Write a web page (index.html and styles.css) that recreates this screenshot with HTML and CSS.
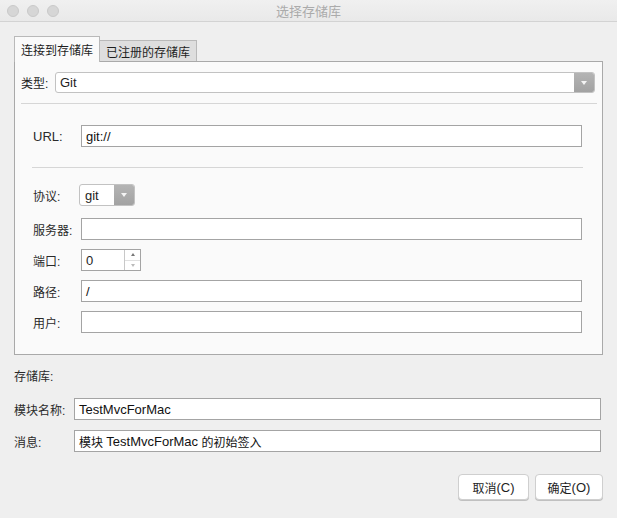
FILE: index.html
```html
<!DOCTYPE html>
<html lang="zh">
<head>
<meta charset="utf-8">
<title>选择存储库</title>
<link rel="stylesheet" href="styles.css">
</head>
<body>
<div class="window">
  <div class="titlebar">
    <div class="lights"><span class="light"></span><span class="light"></span><span class="light"></span></div>
    <div class="title">选择存储库</div>
    <div></div>
  </div>
  <div class="content">
    <div class="tabs">
      <div class="tab active">连接到存储库</div>
      <div class="tab">已注册的存储库</div>
    </div>
    <div class="panel">
      <div class="type-row">
        <span class="type-label">类型:</span>
        <div class="combo wide"><span class="combo-text latin">Git</span><span class="combo-btn"><span class="tri"></span></span></div>
      </div>
      <div class="sep outer"></div>
      <div class="group">
        <div class="row url-row"><span class="lbl latin">URL:</span><div class="field latin">git://</div></div>
        <div class="sep inner"></div>
        <div class="row proto-row"><span class="lbl">协议:</span><div class="combo small"><span class="combo-text latin">git</span><span class="combo-btn"><span class="tri"></span></span></div></div>
        <div class="row"><span class="lbl">服务器:</span><div class="field"></div></div>
        <div class="row"><span class="lbl">端口:</span><div class="spin"><span class="spin-text latin">0</span><span class="spin-arrows"><span class="up"></span><span class="down"></span></span></div></div>
        <div class="row"><span class="lbl">路径:</span><div class="field latin">/</div></div>
        <div class="row"><span class="lbl">用户:</span><div class="field"></div></div>
      </div>
    </div>
    <div class="repo-label">存储库:</div>
    <div class="brow first"><span class="blbl">模块名称:</span><div class="field latin">TestMvcForMac</div></div>
    <div class="brow"><span class="blbl">消息:</span><div class="field">模块 <span class="latin">TestMvcForMac</span> 的初始签入</div></div>
    <div class="buttons">
      <button class="btn cancel">取消<span class="latin">(C)</span></button>
      <button class="btn ok">确定<span class="latin">(O)</span></button>
    </div>
  </div>
</div>
</body>
</html>
```
FILE: styles.css
```css
* { box-sizing: border-box; }
html, body { margin: 0; padding: 0; }
body {
  width: 617px;
  height: 518px;
  background: #ececec;
  font-family: "Liberation Sans", "Noto Sans CJK SC", sans-serif;
  font-size: 12px;
  color: #1e1e1e;
  overflow: hidden;
}
.latin { font-size: 13px; }
.window { width: 617px; height: 518px; background: #efefef; }
.titlebar {
  height: 22px;
  display: grid;
  grid-template-columns: 1fr auto 1fr;
  align-items: center;
  background: linear-gradient(#f0f0f0, #e9e9e9);
  border-bottom: 1px solid #d3d3d3;
}
.lights { display: flex; gap: 8px; padding-left: 7px; }
.light {
  width: 12px; height: 12px; border-radius: 50%;
  background: #d6d6d6; border: 1px solid #c9c9c9;
}
.title { color: #ababab; font-size: 13px; }
.content { padding: 14px 14px 0 14px; }
.tabs { display: flex; align-items: flex-end; height: 25px; }
.tab {
  height: 21px;
  padding: 0 6px 0 6px;
  border: 1px solid #b9b9b9;
  border-bottom: none;
  background: #dedede;
  display: flex; align-items: center;
  color: #1e1e1e;
  margin-left: -1px;
}
.tab.active {
  background: #fafafa;
  margin-left: 0;
  padding: 0 6px 0 6px;
  position: relative;
  z-index: 1;
  margin-bottom: -1px;
  height: 26px;
}
.panel {
  width: 589px;
  height: 294px;
  background: #fafafa;
  border: 1px solid #a9a9a9;
  padding: 10px 7px 0 5px;
}
.type-row { display: flex; align-items: center; height: 21px; }
.type-label { width: 35px; padding-left: 1px; }
.combo {
  display: flex; height: 21px;
  border: 1px solid #c2c2c2; border-radius: 3px;
  background: #fff; overflow: hidden;
}
.combo.wide { width: 540px; }
.combo-text { flex: 1; display: flex; align-items: center; padding-left: 4px; }
.combo-btn {
  width: 20px; background: linear-gradient(#b4b4b4, #a2a2a2);
  display: flex; align-items: center; justify-content: center;
}
.tri {
  width: 0; height: 0;
  border-left: 3px solid transparent; border-right: 3px solid transparent;
  border-top: 4px solid #f4f4f4;
}
.sep { height: 1px; background: #d6d6d6; }
.sep.outer { margin: 10px 0 0 1px; width: 576px; }
.group { padding: 21px 13px 0 13px; }
.row { display: flex; align-items: center; height: 22px; margin-bottom: 9px; }
.lbl { width: 48px; color: #2a2a2a; }
.field {
  flex: 1; height: 22px;
  border: 1px solid #a4a4a4;
  background: #fff;
  display: flex; align-items: center;
  padding-left: 4px;
  color: #111;
  white-space: pre;
}
.url-row { margin-bottom: 0; }
.sep.inner { margin: 20px 0 16px -1px; width: 551px; }
.proto-row { margin-bottom: 12px; }
.combo.small { width: 56px; margin-left: -2px; height: 22px; }
.combo.small .combo-text { padding-left: 5px; }
.spin {
  width: 60px; height: 22px;
  border: 1px solid #a4a4a4; background: #fff;
  display: flex;
}
.spin-text { flex: 1; display: flex; align-items: center; padding-left: 4px; }
.spin-arrows {
  width: 16px; border-left: 1px solid #c8c8c8;
  display: flex; flex-direction: column;
}
.spin-arrows .up, .spin-arrows .down {
  flex: 1; display: flex; align-items: center; justify-content: center;
}
.spin-arrows .up { border-bottom: 1px solid #e0e0e0; }
.spin-arrows .up::after {
  content: ""; border-left: 2px solid transparent; border-right: 2px solid transparent;
  border-bottom: 3px solid #777;
}
.spin-arrows .down::after {
  content: ""; border-left: 2px solid transparent; border-right: 2px solid transparent;
  border-top: 3px solid #bbb;
}
.repo-label { margin-top: 13px; height: 18px; line-height: 18px; color: #2a2a2a; }
.brow { display: flex; align-items: center; height: 22px; margin-top: 10px; }
.brow.first { margin-top: 12px; }
.blbl { width: 60px; color: #2a2a2a; }
.brow .field { flex: 0 0 527px; }
.buttons {
  display: flex; justify-content: flex-end; gap: 6px;
  margin-top: 22px; padding-right: 0;
}
.btn {
  font-family: inherit; font-size: 12px; color: #1e1e1e;
  height: 26px;
  background: #fff;
  border: 1px solid #cfcfcf;
  border-radius: 4px;
  box-shadow: 0 1px 0 #c0c0c0;
  display: flex; align-items: center; justify-content: center;
  padding: 0;
}
.btn.cancel { width: 71px; }
.btn.ok { width: 68px; }
```
